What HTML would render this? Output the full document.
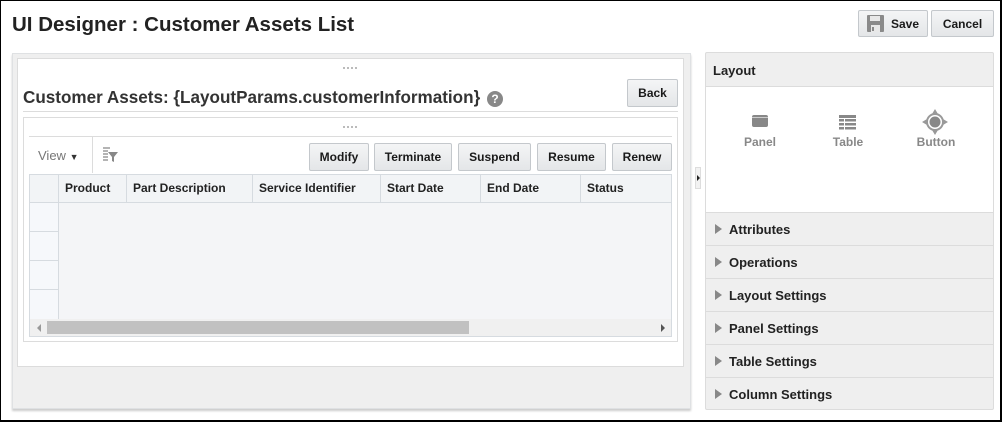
<!DOCTYPE html>
<html><head><style>
*{box-sizing:border-box;margin:0;padding:0}
body{width:1002px;height:422px;overflow:hidden;background:#fff;font-family:"Liberation Sans",sans-serif;position:relative}
.frame{position:absolute;left:0;top:0;width:1002px;height:422px;border:1px solid #000;border-width:1px 2px 2px 1px;z-index:10;pointer-events:none}
.a{position:absolute}
.btn{position:absolute;background:linear-gradient(#f4f5f6,#e4e6e8);border:1px solid #c4c8cc;border-radius:2px;font-size:12px;font-weight:bold;color:#1a1a1a;display:flex;align-items:center;justify-content:center}
.th{position:absolute;top:0;height:28px;line-height:27px;font-size:12px;font-weight:bold;color:#222;padding-left:6px;border-right:1px solid #d6dbe0}
.row{position:absolute;left:0;width:288px;height:33px;border-top:1px solid #dcdcdc;font-size:13px;font-weight:bold;color:#222;line-height:33px;padding-left:23px}
.row:before{content:"";position:absolute;left:9px;top:11px;border-left:7px solid #888;border-top:5px solid transparent;border-bottom:5px solid transparent}
.ic{position:absolute;text-align:center;font-size:12px;font-weight:bold;color:#888;width:80px}
</style></head><body>
<div class="frame"></div>
<div class="a" style="left:12px;top:13px;font-size:20.5px;font-weight:bold;color:#222">UI Designer : Customer Assets List</div>
<div class="btn" style="left:858px;top:10px;width:70px;height:27px;justify-content:flex-start;padding-left:8px"><svg width="17" height="17" viewBox="0 0 17 17" style="margin-right:7px"><rect x="0" y="0" width="17" height="17" rx="1" fill="#8a8a8a"/><rect x="3" y="1" width="10" height="5" fill="#e8e8e8"/><rect x="4" y="10" width="9" height="7" fill="#e8e8e8"/><rect x="5" y="12" width="2" height="4" fill="#8a8a8a"/></svg>Save</div>
<div class="btn" style="left:931px;top:10px;width:63px;height:27px">Cancel</div>

<div class="a" style="left:12px;top:53px;width:679px;height:356px;background:#efefef;border:1px solid #dfe1e3;box-shadow:0 2px 2px #ccc"></div>
<div class="a" style="left:17px;top:58px;width:667px;height:309px;background:#fff;border:1px solid #dcdcdc"></div>
<div class="a" style="left:343px;top:67px;width:14px;height:3px;border-top:2px dotted #bbb"></div>
<div class="a" style="left:23px;top:88px;font-size:17.1px;font-weight:bold;color:#333;white-space:nowrap">Customer Assets: {LayoutParams.customerInformation}</div>
<div class="a" style="left:487px;top:91px;width:16px;height:16px;border-radius:50%;background:#888;color:#fff;font-size:12px;font-weight:bold;text-align:center;line-height:16px">?</div>
<div class="btn" style="left:627px;top:79px;width:51px;height:28px">Back</div>
<div class="a" style="left:23px;top:111px;width:655px;height:1px;background:#dcdcdc"></div>
<div class="a" style="left:23px;top:117px;width:655px;height:225px;border:1px solid #dcdcdc"></div>
<div class="a" style="left:343px;top:126px;width:14px;height:3px;border-top:2px dotted #bbb"></div>
<div class="a" style="left:29px;top:136px;width:643px;height:1px;background:#dcdcdc"></div>
<div class="a" style="left:38px;top:148px;font-size:13px;color:#777">View <span style="font-size:9px;color:#333">▼</span></div>
<div class="a" style="left:92px;top:137px;width:1px;height:36px;background:#dcdcdc"></div>
<svg class="a" style="left:102px;top:147px" width="16" height="16" viewBox="0 0 16 16"><path d="M1 1h7M1 4h5M1 7h5M1 10h5M1 13h5" stroke="#888" stroke-width="1.2"/><path d="M6 5h10l-4 5v5l-2-1v-4z" fill="#888"/></svg>
<div class="btn" style="left:309px;top:143px;width:60px;height:28px">Modify</div>
<div class="btn" style="left:374px;top:143px;width:78px;height:28px">Terminate</div>
<div class="btn" style="left:458px;top:143px;width:73px;height:28px">Suspend</div>
<div class="btn" style="left:537px;top:143px;width:69px;height:28px">Resume</div>
<div class="btn" style="left:612px;top:143px;width:60px;height:28px">Renew</div>

<div class="a" style="left:29px;top:174px;width:643px;height:163px;border:1px solid #d6dbe0;background:#f4f5f7;overflow:hidden">
 <div class="a" style="left:0;top:0;width:643px;height:28px;background:#f2f4f6;border-bottom:1px solid #d6dbe0"></div>
 <div class="th" style="left:0;width:29px"></div>
 <div class="th" style="left:29px;width:68px">Product</div>
 <div class="th" style="left:97px;width:126px">Part Description</div>
 <div class="th" style="left:223px;width:128px">Service Identifier</div>
 <div class="th" style="left:351px;width:100px">Start Date</div>
 <div class="th" style="left:451px;width:100px">End Date</div>
 <div class="th" style="left:551px;width:92px;border-right:0">Status</div>
 <div class="a" style="left:0;top:28px;width:29px;height:116px;background:#f6f8fb;border-right:1px solid #d6dbe0"></div>
 <div class="a" style="left:0;top:56px;width:29px;height:1px;background:#d6dbe0"></div>
 <div class="a" style="left:0;top:85px;width:29px;height:1px;background:#d6dbe0"></div>
 <div class="a" style="left:0;top:114px;width:29px;height:1px;background:#d6dbe0"></div>
 <div class="a" style="left:0;top:144px;width:643px;height:19px;background:#f0f0f0"></div>
 <div class="a" style="left:17px;top:146px;width:422px;height:13px;background:#c1c1c1"></div>
 <div class="a" style="left:7px;top:149px;border-right:4px solid #999;border-top:4px solid transparent;border-bottom:4px solid transparent"></div>
 <div class="a" style="left:631px;top:149px;border-left:4px solid #555;border-top:4px solid transparent;border-bottom:4px solid transparent"></div>
</div>

<div class="a" style="left:695px;top:167px;width:6px;height:22px;background:#f2f2f2;border:1px solid #ddd"></div>
<div class="a" style="left:697px;top:175px;border-left:3px solid #222;border-top:3px solid transparent;border-bottom:3px solid transparent"></div>

<div class="a" style="left:705px;top:52px;width:289px;height:358px;background:#efefef;border:1px solid #dcdcdc;border-radius:2px;overflow:hidden">
 <div class="a" style="left:7px;top:10px;font-size:13px;font-weight:bold;color:#222">Layout</div>
 <div class="a" style="left:0;top:33px;width:289px;height:127px;background:#fff;border-top:1px solid #dcdcdc"></div>
 <div class="a" style="left:46px;top:62px;width:16px;height:12px;background:#888;border-radius:2px"></div>
 <div class="a" style="left:46px;top:64px;width:16px;height:1px;background:#ccc"></div>
 <svg class="a" style="left:133px;top:62px" width="17" height="15"><g fill="#888"><rect x="0" y="0" width="17" height="3"/><rect x="0" y="4" width="5" height="2.5"/><rect x="6" y="4" width="11" height="2.5"/><rect x="0" y="8" width="5" height="2.5"/><rect x="6" y="8" width="11" height="2.5"/><rect x="0" y="12" width="5" height="2.5"/><rect x="6" y="12" width="11" height="2.5"/></g></svg>
 <svg class="a" style="left:216px;top:56px" width="26" height="26" viewBox="0 0 26 26"><circle cx="13" cy="13" r="8" fill="none" stroke="#999" stroke-width="2"/><circle cx="13" cy="13" r="5.5" fill="#888"/><path d="M13 0l3 5h-6zM13 26l3-5h-6zM0 13l5-3v6zM26 13l-5-3v6z" fill="#999"/></svg>
 <div class="ic" style="left:14px;top:82px">Panel</div>
 <div class="ic" style="left:102px;top:82px">Table</div>
 <div class="ic" style="left:190px;top:82px">Button</div>
 <div class="row" style="top:159px">Attributes</div>
 <div class="row" style="top:192px">Operations</div>
 <div class="row" style="top:225px">Layout Settings</div>
 <div class="row" style="top:258px">Panel Settings</div>
 <div class="row" style="top:291px">Table Settings</div>
 <div class="row" style="top:324px">Column Settings</div>
</div>
</body></html>
